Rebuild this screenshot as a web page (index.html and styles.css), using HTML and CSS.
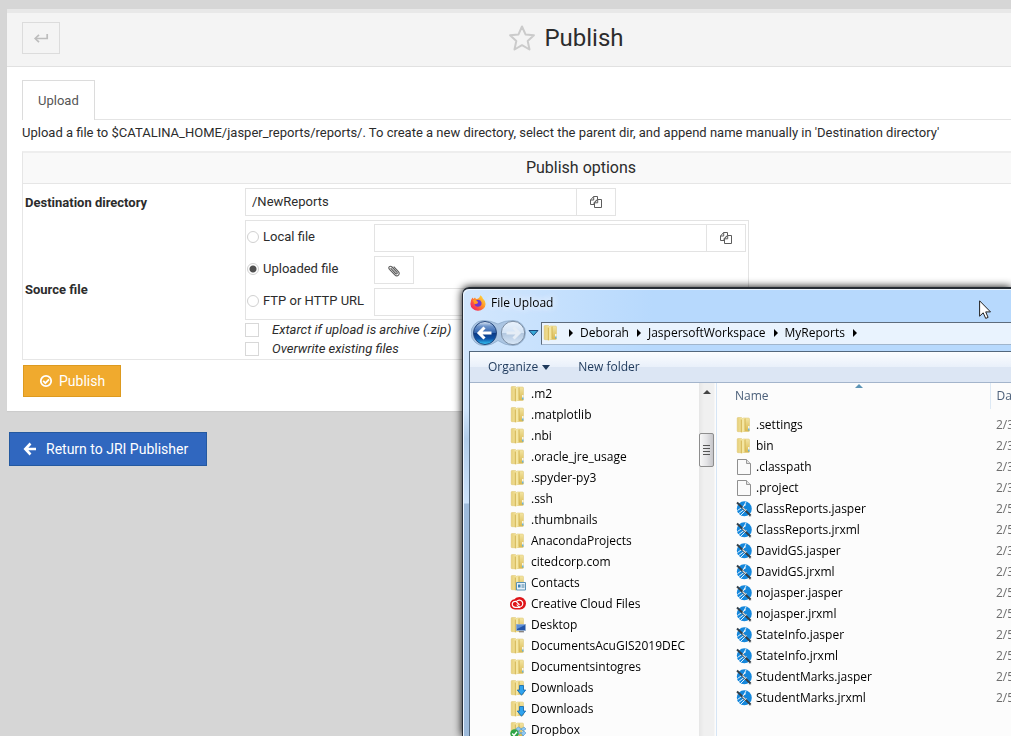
FILE: index.html
```html
<!DOCTYPE html>
<html lang="en">
<head>
<meta charset="utf-8">
<title>Publish</title>
<link rel="stylesheet" href="styles.css">
</head>
<body>
<svg class="defs" aria-hidden="true">
  <defs>
    <linearGradient id="g-back" x1="0" y1="0" x2="0" y2="1"><stop offset="0" stop-color="#e3ecf7"/><stop offset=".2" stop-color="#6f95cb"/><stop offset=".5" stop-color="#2f62ad"/><stop offset=".52" stop-color="#0b3a86"/><stop offset=".75" stop-color="#0d53a8"/><stop offset="1" stop-color="#35cdfb"/></linearGradient>
    <linearGradient id="g-fwd" x1="0" y1="0" x2="0" y2="1"><stop offset="0" stop-color="#eaf3fd"/><stop offset=".5" stop-color="#d3e3f5"/><stop offset=".52" stop-color="#b3c8e0"/><stop offset="1" stop-color="#d9e8f8"/></linearGradient>
    <linearGradient id="g-fold" x1="0" y1="0" x2="1" y2="0"><stop offset="0" stop-color="#e6cf78"/><stop offset="1" stop-color="#f5e6a4"/></linearGradient>
    <linearGradient id="g-fold2" x1="0" y1="0" x2="0" y2="1"><stop offset="0" stop-color="#f3e5a3"/><stop offset="1" stop-color="#d9b84e"/></linearGradient>
    <linearGradient id="g-fox" x1="1" y1="0" x2="0" y2="1"><stop offset="0" stop-color="#fff04a"/><stop offset=".4" stop-color="#ff9a26"/><stop offset=".75" stop-color="#fb3d4c"/><stop offset="1" stop-color="#e11b7a"/></linearGradient>
  </defs>
  <symbol id="folder" viewBox="0 0 16 16">
    <path d="M7 1h5.500q1 0 1 1v11.500q0 1-1 1H7z" fill="url(#g-fold2)" stroke="#dcc470" stroke-width=".5"/>
    <path d="M1.200 1.300q0-.8.8-.8h3.500l1 .8v13.400H2q-.8 0-.8-.8z" fill="url(#g-fold)" stroke="#dcc470" stroke-width=".5"/>
    <path d="M5.200 2.300L8.600.8q.6 0 .6.600v12.400L5.800 15.600q-.6 0-.6-.6z" fill="#f4e6a2"/>
    <path d="M5.300 2.500v12.700M9 1.500v12.300" stroke="#cfae48" stroke-width=".9"/>
    <path d="M12.800 9v4" stroke="#f8fbfb" stroke-width="1.300"/><path d="M12.800 11.500v2" stroke="#4aa5dc" stroke-width="1.200"/>
  </symbol>
  <symbol id="contacts" viewBox="0 0 16 16"><use href="#folder"/><path d="M6.500 7.500h9v7.500h-9z" fill="#e8f3fb" stroke="#5b93b5"/><path d="M8 9.500h2.500v3H8z" fill="#3f83b5"/><path d="M11.500 10h3M11.500 12h3" stroke="#4b7f9f"/></symbol>
  <symbol id="desktop" viewBox="0 0 16 16"><use href="#folder"/><path d="M6.500 7.500h9v6h-9z" fill="#2455a8" stroke="#8fa9cb"/><path d="M7 8h8l-8 4z" fill="#5d8fd6"/><path d="M9 14.800h5" stroke="#667"/></symbol>
  <symbol id="download" viewBox="0 0 16 16"><use href="#folder"/><path d="M9.500 5.500h4v4.500h2.200l-4.200 5.300L7.300 10h2.200z" fill="#2fa3ee" stroke="#1264ad" stroke-width=".8"/></symbol>
  <symbol id="dropbox" viewBox="0 0 16 16"><use href="#folder"/><path d="M8.500 5l3 2-3 2-3-2zM14 5l2 2-3 2-2-2zM8 9l3 2-3 2-3-2zM14 9l2 2-3 3-2-3z" fill="#8fc8f2" stroke="#3f8dca" stroke-width=".5"/><circle cx="4.500" cy="11.500" r="4.200" fill="#2fa546"/><path d="M2.200 11.500l1.800 1.900 3-3.700" fill="none" stroke="#fff" stroke-width="1.400"/></symbol>
  <symbol id="cloud" viewBox="0 0 16 16"><path d="M8 1.300q3-1.200 5.700 1.200Q16 4.500 16 7.500q-.5 5.500-6 6H5Q.2 13 0 8.500 0 4 4.500 3.300 6 1.500 8 1.300z" fill="#df1519"/><g fill="none" stroke="#fff" stroke-width="1.200"><path d="M10.200 11.300H5.200a3 3 0 1 1 .8-5.900l3.500 3.600"/><path d="M6.500 5.500a3.500 3.500 0 1 1 3.700 5.500q-1.800 0-3.500-2.500"/></g></symbol>
  <symbol id="doc" viewBox="0 0 16 16"><path d="M1.500.5h9l4 4v11h-13z" fill="#fafafa" stroke="#8f8f8f"/><path d="M10.500.5v4h4" fill="#e2e2e2" stroke="#999"/></symbol>
  <symbol id="jasper" viewBox="0 0 16 16"><circle cx="8.300" cy="7.800" r="7.500" fill="#1487dc"/><path d="M12.500 15.600h2.700v-2.300z" fill="#aaa"/><g stroke="#fff" stroke-width=".9"><path d="M1.500 9.500L10 3.500M2 13L8 8.500M4.500 14.500l6-6M7.500 5.500L10 1"/></g><path d="M1 1.500l13.500 13" stroke="#35404a" stroke-width="2"/><path d="M6.500 6.500l3.500 3.200" stroke="#d4dde3" stroke-width="1.300"/></symbol>
  <symbol id="copy" viewBox="0 0 14 14"><path d="M1.500 5L4.600 1.500h3.900v3M8 4.500L5 7.800v1.700H1.500V5h3.200V1.500M5.500 7.800L8.600 4.500h3.900v8h-7V7.800h3.200V4.500" fill="none" stroke="#5c5c5c"/></symbol>
</svg>

<main class="panel">
  <header class="panel-head">
    <button class="back" type="button" aria-label="Back"><svg width="16" height="12" viewBox="0 0 16 12"><path d="M14.200 2v4.500H3" fill="none" stroke="#bdbdbd" stroke-width="1.700"/><path d="M6 2.800L2.200 6.500 6 10.200" fill="none" stroke="#bdbdbd" stroke-width="1.700"/></svg></button>
    <h1 class="title"><svg width="28" height="28" viewBox="0 0 28 28" aria-hidden="true"><path d="M14 2.500l3.500 7.900 8.400.9-6.200 5.700 1.800 8.500-7.500-4.300-7.500 4.300 1.800-8.500-6.200-5.700 8.400-.9z" fill="none" stroke="#cbcbcb" stroke-width="2" stroke-linejoin="round"/></svg>Publish</h1>
  </header>
  <div class="panel-body">
    <nav class="tabs"><a class="tab" href="#upload">Upload</a></nav>
    <form id="upload">
      <p class="hint">Upload a file to $CATALINA_HOME/jasper_reports/reports/. To create a new directory, select the parent dir, and append name manually in 'Destination directory'</p>
      <section class="options">
        <h2 class="options-title">Publish options</h2>
        <div class="field">
          <label class="name" for="dest">Destination directory</label>
          <div class="picker"><input class="text" id="dest" type="text" value="/NewReports"><button class="browse" type="button" aria-label="Browse directories"><svg width="14" height="14"><use href="#copy"/></svg></button></div>
        </div>
        <div class="field">
          <span class="name">Source file</span>
          <div>
            <div class="sources">
              <label class="choice"><input type="radio" name="src">Local file</label>
              <div class="picker"><input class="text" type="text" aria-label="Local file path"><button class="browse" type="button" aria-label="Browse files"><svg width="14" height="14"><use href="#copy"/></svg></button></div>
              <label class="choice"><input type="radio" name="src" checked>Uploaded file</label>
              <div class="picker"><button class="browse only" type="button" aria-label="Attach file"><svg width="14" height="14" viewBox="0 0 14 14"><path d="M3.600 5.200l5 5.300c1 1 2.300-.2 1.400-1.200L5 4C3.200 2.200.7 4.200 2.500 6.300l5.300 5.500c2.600 2.500 6-.5 3.600-3.200L6.700 3.700" fill="none" stroke="#5c5c5c" stroke-width="1.100"/></svg></button></div>
              <label class="choice"><input type="radio" name="src">FTP or HTTP URL</label>
              <div class="picker"><input class="text" type="text" aria-label="URL"></div>
            </div>
            <label class="check"><input type="checkbox">Extarct if upload is archive (.zip)</label>
            <label class="check"><input type="checkbox">Overwrite existing files</label>
          </div>
        </div>
      </section>
      <button class="publish" type="button"><svg width="14" height="14" viewBox="0 0 14 14"><circle cx="7" cy="7" r="5.200" fill="none" stroke="#fff" stroke-width="1.800"/><path d="M4.200 6.800l2.200 2.300 3.600-3.700" fill="none" stroke="#fff" stroke-width="1.800"/></svg>Publish</button>
    </form>
  </div>
</main>
<a class="return" href="#publisher"><svg width="14" height="14" viewBox="0 0 14 14"><path d="M7.500 1.500L2.300 7l5.200 5.500M2.500 7H13" fill="none" stroke="#fff" stroke-width="2.600"/></svg>Return to JRI Publisher</a>

<section class="dialog" role="dialog" aria-labelledby="dlg-title">
  <div class="dlg-title"><svg width="16" height="16" viewBox="0 0 16 16" aria-hidden="true"><path d="M10.300.3q2.200 1.500 2.500 3.200 2.800 2.200 2.800 5.500A7.500 7 0 0 1 8 15.800 7.500 7 0 0 1 .4 9Q.4 5 2.500 2.600l.9 1.500 1.600-1.700 1 1.600q3.700-.2 4.300-3.700z" fill="url(#g-fox)"/><path d="M6 5.200q4.500-1.500 5.500 2.300.6 4-3.400 4.200-3.300 0-3.600-3 .8.700 2.200.3 1.300-.8 1.300-1.800-1.500.1-2-2z" fill="#6f36d2"/><path d="M3 5q2.500-1 4.500 1.500l.5 1.200-3.500 1.500z" fill="#ff9d25"/></svg><span class="glow" id="dlg-title">File Upload</span></div>
  <div class="nav">
    <svg class="nav-arrows" width="69" height="28" viewBox="0 0 69 28" role="img" aria-label="Back and forward"><path d="M12 1.500q8 0 15 3.500 6-3.500 15-3.500a12.500 12.500 0 0 1 0 25q-8 0-15-5-6 5-14 5A12.500 12.500 0 0 1 12 1.500z" fill="#abc5e2" stroke="#8faccc" stroke-width=".8"/><circle cx="14" cy="14" r="11.500" fill="url(#g-back)" stroke="#24467c"/><path d="M20.500 14H9M13.500 8.500L8 14l5.500 5.500" fill="none" stroke="#fff" stroke-width="3"/><circle cx="42" cy="14" r="11.700" fill="url(#g-fwd)" stroke="#7b8da3"/><path d="M35.500 14H47M42.500 8.500L48 14l-5.500 5.500" fill="none" stroke="#e5edf6" stroke-width="3"/><path d="M58 11.500h9l-4.500 5z" fill="#37a9d8" stroke="#1a4678"/></svg>
    <div class="address"><svg width="16" height="16"><use href="#folder"/></svg><i class="arrow"></i><span>Deborah</span><i class="arrow"></i><span>JaspersoftWorkspace</span><i class="arrow"></i><span>MyReports</span><i class="arrow"></i></div>
  </div>
  <div class="client">
    <div class="commands"><button type="button">Organize<i class="down"></i></button><button type="button">New folder</button></div>
    <div class="panes">
      <ul class="tree">
        <li><svg><use href="#folder"/></svg>.m2</li>
        <li><svg><use href="#folder"/></svg>.matplotlib</li>
        <li><svg><use href="#folder"/></svg>.nbi</li>
        <li><svg><use href="#folder"/></svg>.oracle_jre_usage</li>
        <li><svg><use href="#folder"/></svg>.spyder-py3</li>
        <li><svg><use href="#folder"/></svg>.ssh</li>
        <li><svg><use href="#folder"/></svg>.thumbnails</li>
        <li><svg><use href="#folder"/></svg>AnacondaProjects</li>
        <li><svg><use href="#folder"/></svg>citedcorp.com</li>
        <li><svg><use href="#contacts"/></svg>Contacts</li>
        <li><svg><use href="#cloud"/></svg>Creative Cloud Files</li>
        <li><svg><use href="#desktop"/></svg>Desktop</li>
        <li><svg><use href="#folder"/></svg>DocumentsAcuGIS2019DEC</li>
        <li><svg><use href="#folder"/></svg>Documentsintogres</li>
        <li><svg><use href="#download"/></svg>Downloads</li>
        <li><svg><use href="#download"/></svg>Downloads</li>
        <li><svg><use href="#dropbox"/></svg>Dropbox</li>
      </ul>
      <div class="scroll"><i class="up"></i><div class="thumb"><i></i><i></i><i></i><i></i></div></div>
      <table class="files">
        <thead><tr><th class="col-name">Name<i class="sort"></i></th><th class="col-date">Dat</th></tr></thead>
        <tbody>
          <tr><td><svg><use href="#folder"/></svg>.settings</td><td>2/3</td></tr>
          <tr><td><svg><use href="#folder"/></svg>bin</td><td>2/3</td></tr>
          <tr><td><svg><use href="#doc"/></svg>.classpath</td><td>2/3</td></tr>
          <tr><td><svg><use href="#doc"/></svg>.project</td><td>2/3</td></tr>
          <tr><td><svg><use href="#jasper"/></svg>ClassReports.jasper</td><td>2/5</td></tr>
          <tr><td><svg><use href="#jasper"/></svg>ClassReports.jrxml</td><td>2/5</td></tr>
          <tr><td><svg><use href="#jasper"/></svg>DavidGS.jasper</td><td>2/3</td></tr>
          <tr><td><svg><use href="#jasper"/></svg>DavidGS.jrxml</td><td>2/3</td></tr>
          <tr><td><svg><use href="#jasper"/></svg>nojasper.jasper</td><td>2/5</td></tr>
          <tr><td><svg><use href="#jasper"/></svg>nojasper.jrxml</td><td>2/5</td></tr>
          <tr><td><svg><use href="#jasper"/></svg>StateInfo.jasper</td><td>2/5</td></tr>
          <tr><td><svg><use href="#jasper"/></svg>StateInfo.jrxml</td><td>2/5</td></tr>
          <tr><td><svg><use href="#jasper"/></svg>StudentMarks.jasper</td><td>2/5</td></tr>
          <tr><td><svg><use href="#jasper"/></svg>StudentMarks.jrxml</td><td>2/5</td></tr>
        </tbody>
      </table>
    </div>
  </div>
</section>
<svg class="cursor" width="13" height="20" viewBox="0 0 13 20" aria-hidden="true"><path d="M.6.8v15.400l3.600-3.400 2.500 5.600 2.400-1-2.400-5.500h4.800z" fill="#fff" stroke="#222"/></svg>
</body>
</html>
```
FILE: styles.css
```css
* { box-sizing: border-box; }
body { margin: 0; padding: 9px 0 0 7px; min-height: 100vh; overflow: hidden; background: #d6d6d6; color: #2c2c2c; font: 400 13px/18px Roboto, sans-serif; }
button, input { font: inherit; color: inherit; }
.defs { position: absolute; width: 0; height: 0; }

.panel { width: calc(100% + 144px); background: #fff; border-top: 4px solid #e8e8e8; box-shadow: 0 1px 1px #ccc; }
.panel-head { display: flex; align-items: center; height: 54px; padding: 0 45px 3px 15px; background: #f4f4f4; border-bottom: 1px solid #e1e1e1; }
.back { display: grid; place-items: center; width: 38px; height: 32px; padding: 0; background: #f4f4f4; border: 1px solid #dcdcdc; }
.title { display: flex; align-items: center; justify-content: center; gap: 8px; flex: 1; margin: 0 38px 0 0; font-size: 24px; line-height: 32px; font-weight: 400; }
.panel-body { padding: 13px 15px 14px; }
.tabs { display: flex; border-bottom: 1px solid #e4e4e4; }
.tab { margin-bottom: -1px; padding: 10px 15px; background: #fff; border: 1px solid #dcdcdc; border-bottom: 0; color: #555; line-height: 19px; text-decoration: none; }
.hint { margin: 0; padding: 4px 0 9px; white-space: nowrap; }
.options { padding-bottom: 1px; border: 1px solid #e6e6e6; border-top: 2px solid #eee; }
.options-title { margin: 0; height: 31px; background: #f9f9f9; border-bottom: 1px solid #e6e6e6; font-size: 16px; line-height: 29px; font-weight: 400; text-align: center; }
.field { display: grid; grid-template-columns: 220px 1fr; align-items: center; padding: 4px 2px 0; }
.name { padding-top: 1px; font-weight: 700; }
.picker { display: flex; }
.text { width: 332px; height: 28px; padding: 0 6px 1px; background: #fff; border: 1px solid #e3e3e3; border-radius: 0; }
.browse { display: grid; place-items: center; width: 39px; height: 28px; padding: 0; background: #fff; border: 1px solid #e3e3e3; border-left: 0; }
.only { width: 40px; border-left: 1px solid #e3e3e3; }
.sources { display: grid; grid-template-columns: 127px 1fr; align-items: center; row-gap: 4px; width: 504px; padding: 3px 1px; border: 1px solid #e3e3e3; }
.sources .text { width: 333px; }
.choice { display: flex; align-items: center; gap: 4px; padding-bottom: 2px; }
.choice input { appearance: none; width: 12px; height: 12px; margin: 0; background: #fff; border: 1px solid #d0d0d0; border-radius: 50%; }
.choice input:checked { background: radial-gradient(circle, #505050 0 3px, #fff 4px); }
.check { display: flex; align-items: center; gap: 13px; height: 19px; font-style: italic; }
.check input { appearance: none; width: 14px; height: 14px; margin: 0; background: #fff; border: 1px solid #d8d8d8; }
.publish { display: flex; align-items: center; gap: 6px; height: 32px; margin: 5px 0 0 1px; padding: 0 15px; background: #f0aa2e; border: 1px solid #dd9a1f; color: #fff; font-size: 14px; }
.return { display: inline-flex; align-items: center; gap: 9px; height: 34px; margin: 21px 0 0 2px; padding: 0 18px 0 13px; background: #3067bf; border: 1px solid #2459a0; color: #fff; font-size: 14px; text-decoration: none; }

.dialog { position: fixed; top: 287px; left: 462px; right: 0; bottom: 0; display: flex; flex-direction: column; overflow: hidden; padding-left: 5px; border: solid #252b33; border-width: 2px 0 0 1px; border-radius: 7px 0 0 0; background: linear-gradient(#d0e5fc 0 120px, #b2cdea 150px, #cce2fa 214px, #9ebbdb 215px) 0 0 / 7px 100% no-repeat, linear-gradient(90deg, #d3e7fd, #b7d9fd 190px); box-shadow: inset 1px 1px #ecf5ff, 0 0 8px #000; color: #000; font: 12px/16px "Open Sans", sans-serif; }
.dialog svg { flex: none; width: 16px; height: 16px; }
.dialog i { display: block; flex: none; }
.dlg-title { display: flex; align-items: center; gap: 5px; height: 27px; padding-left: 2px; }
.glow { text-shadow: 0 0 8px #fff, 0 0 8px #fff; }
.nav { display: flex; align-items: center; gap: 1px; height: 35px; padding: 0 0 1px 3px; }
.dialog .nav-arrows { width: 69px; height: 28px; }
.address { display: flex; align-items: center; flex: 1; height: 23px; padding-left: 1px; border: 1px solid #5d6b7c; border-width: 1px 0 1px 1px; border-bottom-color: #a0b5cc; background: #e9f3fe; }
.arrow { width: 0; margin: 0 7px 0 8px; border: 4px solid transparent; border-left: 4px solid #000; border-right: 0; }
.address svg { margin-right: 2px; }
.client { flex: 1; min-height: 0; display: flex; flex-direction: column; margin-left: 1px; border: 1px solid #52677d; border-width: 1px 0 0 1px; background: #fcfcfc; }
.commands { display: flex; flex: none; height: 31px; padding-left: 18px; gap: 28px; border-bottom: 1px solid #a3b4cb; background: linear-gradient(#fbfdff, #e9f0fa 50%, #dce6f4 51%, #dce6f4); }
.commands button { display: flex; align-items: center; gap: 4px; padding: 0; border: 0; background: none; color: #1e395b; }
.down { border: 4px solid transparent; border-top: 5px solid #1e395b; border-bottom: 0; }
.panes { display: flex; flex: 1; min-height: 0; }
.tree { flex: none; width: 229px; margin: 0; padding: 0 0 0 40px; list-style: none; }
.tree li { display: flex; align-items: center; gap: 5px; height: 21px; white-space: nowrap; }
.scroll { flex: none; width: 18px; padding-top: 7px; border-right: 1px solid #d6e5f5; background: linear-gradient(90deg, #e6e6e6, #f0f0f0 5px, #f0f0f0 15px, #fcfcfc 16px); }
.up { width: 0; margin-left: 4px; border: 4px solid transparent; border-bottom: 4px solid #444; border-top: 0; }
.thumb { width: 15px; height: 34px; margin-top: 39px; padding: 11px 3px; border: 1px solid #8d8d8d; border-radius: 2px; background: linear-gradient(90deg, #f7f7f7, #e4e4e6 50%, #c6c6ca); }
.thumb i { height: 1px; margin-bottom: 2px; background: #555; }
.files { flex: none; width: 300px; align-self: flex-start; table-layout: fixed; border-collapse: collapse; }
.files th { position: relative; height: 26px; padding: 0 0 0 18px; color: #4c607a; font-weight: 400; text-align: left; }
.files .col-name { width: 273px; border-right: 1px solid #dde9f5; }
.files .col-date { padding-left: 6px; }
.files thead::after { content: ""; display: block; height: 5px; }
.files td { height: 21px; padding: 0 0 0 6px; color: #6d6d6d; white-space: nowrap; }
.files td:first-child { padding-left: 19px; color: #000; }
.files td svg { margin-right: 4px; vertical-align: -4px; }
.sort { position: absolute; top: 1px; left: 138px; border: 4px solid transparent; border-bottom: 4px solid #5d94b5; border-top: 0; }
.cursor { position: fixed; top: 300px; left: 979px; }
```
